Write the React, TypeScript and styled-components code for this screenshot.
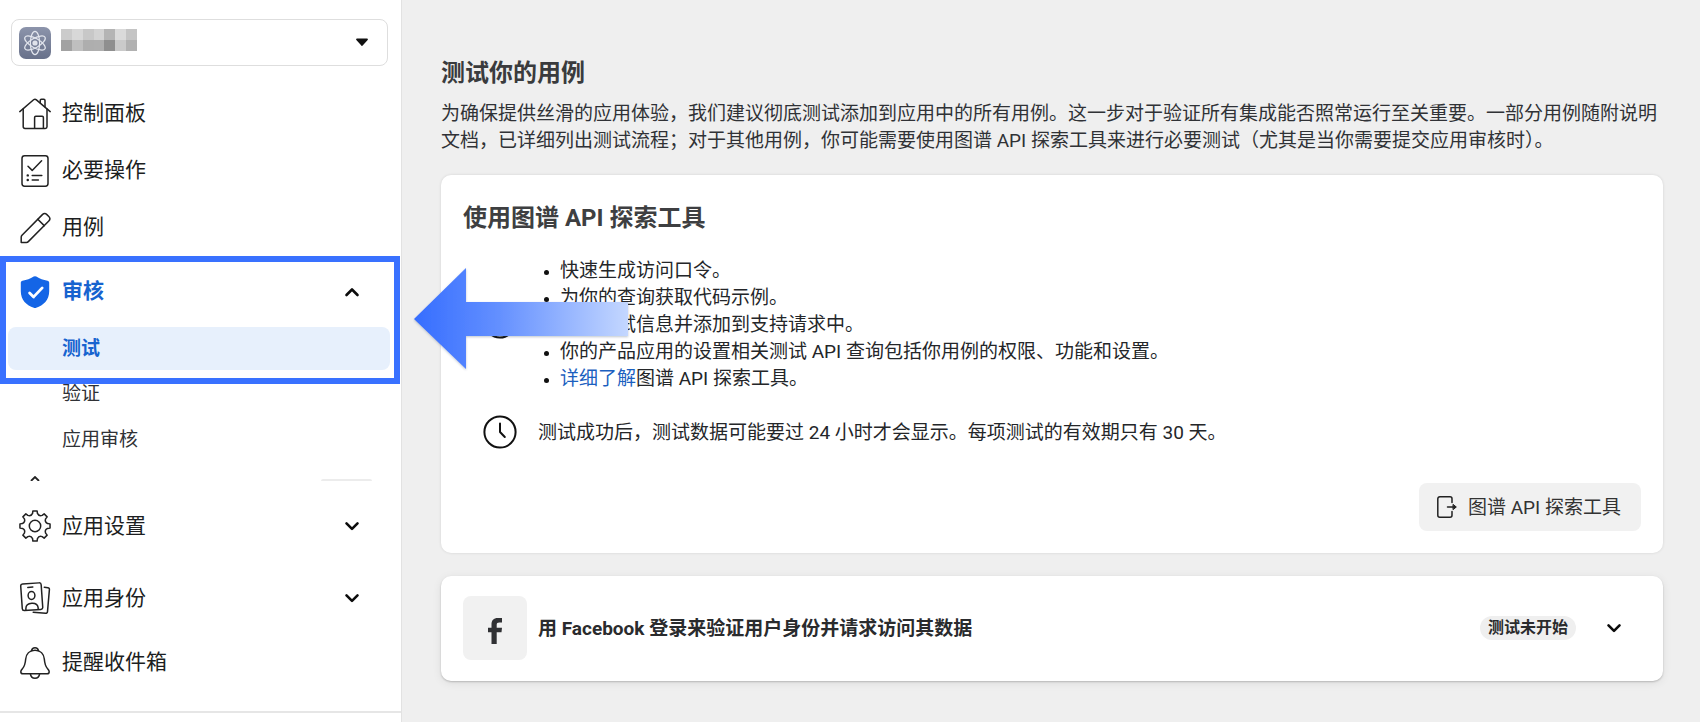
import React from "react";
import styled, { createGlobalStyle } from "styled-components";

const GlobalStyle = createGlobalStyle`
  *, *::before, *::after { box-sizing: border-box; }
  body {
    margin: 0;
    background: #efefef;
    color: #1c1e21;
    font-family: Roboto, "Noto Sans CJK SC", sans-serif;
    font-size: 19px;
    line-height: 27px;
  }
  h1, h2, h3, p, ul { margin: 0; padding: 0; }
  button { font: inherit; color: inherit; border: 0; background: none; padding: 0; cursor: pointer; text-align: left; }
  a { color: inherit; text-decoration: none; }
  svg { display: block; flex: none; }
`;

const Page = styled.div`
  display: flex;
  min-height: 100vh;
`;

const Sidebar = styled.aside`
  flex: none;
  width: 402px;
  padding-top: 19px;
  background: #fff;
  border-right: 1px solid #e2e2e2;
`;

const AppPicker = styled.button`
  display: flex;
  align-items: center;
  width: 377px;
  height: 47px;
  margin: 0 0 19px 11px;
  padding: 0 18px 0 7px;
  border: 1px solid #dedede;
  border-radius: 8px;
`;

const MaskedName = styled.span`
  display: grid;
  grid-template-columns: repeat(7, 1fr);
  width: 76px;
  height: 22px;
  margin: 0 auto 6px 10px;
`;

const MaskCell = styled.span<{ $shade: string }>`
  background: ${(p) => p.$shade};
`;

const rowLayout = `
  display: flex;
  align-items: center;
  gap: 11px;
  width: 100%;
  padding: 0 41px 0 19px;
  font-size: 21px;
`;

const NavLink = styled.a`
  ${rowLayout}
  height: 57px;
`;

const NavToggle = styled.button<{ $active?: boolean }>`
  ${rowLayout}
  height: ${(p) => (p.$active ? 71 : 72)}px;
  color: ${(p) => (p.$active ? "#1763cf" : "inherit")};
  font-weight: ${(p) => (p.$active ? 700 : 400)};
`;

const NavLabel = styled.span`
  flex: 1;
`;

const ReviewGroup = styled.div`
  position: relative;
`;

const SubLink = styled.a<{ $active?: boolean }>`
  display: flex;
  align-items: center;
  height: ${(p) => (p.$active ? 43 : 46)}px;
  margin: 0 11px 0 8px;
  padding-left: 54px;
  border-radius: 8px;
  background: ${(p) => (p.$active ? "#e7f0fc" : "transparent")};
  color: ${(p) => (p.$active ? "#1763cf" : "#303236")};
  font-weight: ${(p) => (p.$active ? 700 : 400)};
`;

const Callout = styled.div`
  position: absolute;
  top: 0;
  left: 0;
  right: 1px;
  height: 128px;
  border: 6px solid #3971ff;
  pointer-events: none;
`;

const CalloutArrow = styled.svg`
  position: absolute;
  top: 11px;
  left: calc(100% + 12px);
  z-index: 1;
  pointer-events: none;
`;

const ClippedRow = styled.div`
  display: flex;
  align-items: flex-end;
  justify-content: space-between;
  height: 28px;
  padding: 0 29px 9px 30px;
`;

const ClippedBadge = styled.span`
  width: 51px;
  height: 2px;
  border-radius: 2px 2px 0 0;
  background: #ececec;
`;

const SidebarFooter = styled.div`
  margin-top: 20px;
  border-top: 2px solid #e6e6e6;
`;

const Main = styled.main`
  flex: 1;
  min-width: 0;
  padding: 57px 37px 40px 39px;
`;

const Title = styled.h1`
  font-size: 24px;
  line-height: 32px;
  font-weight: 700;
  color: #3a3b3d;
`;

const Intro = styled.p`
  margin: 11px 0 21px;
  color: #303236;
`;

const Card = styled.section`
  padding: 27px 22px 22px;
  border-radius: 10px;
  background: #fff;
  box-shadow: 0 0 3px rgba(0, 0, 0, 0.12);
`;

const CardTitle = styled.h2`
  font-size: 24px;
  line-height: 32px;
  font-weight: 700;
  color: #3e3f41;
`;

const InfoRow = styled.div`
  display: flex;
  align-items: center;
  gap: 21px;
  min-height: 34px;
  margin-top: 23px;
  padding-left: 20px;
  color: #242629;
`;

const Bullets = styled.ul`
  list-style: none;
  margin-left: 6px;
`;

const Bullet = styled.li`
  display: flex;
  align-items: flex-start;
  gap: 11px;
  &::before {
    content: "";
    flex: none;
    width: 5px;
    height: 5px;
    margin-top: 13px;
    border-radius: 50%;
    background: #111;
  }
`;

const InlineLink = styled.a`
  color: #1b5fbf;
`;

const CardActions = styled.div`
  display: flex;
  justify-content: flex-end;
  margin-top: 34px;
`;

const ToolButton = styled.button`
  display: flex;
  align-items: center;
  gap: 11px;
  height: 48px;
  padding: 0 20px 0 18px;
  border-radius: 8px;
  background: #f1f1f1;
  color: #333;
`;

const UseCaseCard = styled.section`
  display: flex;
  align-items: center;
  margin-top: 23px;
  padding: 20px 41px 21px 22px;
  border-radius: 10px;
  background: #fff;
  box-shadow: 0 1px 2px rgba(0, 0, 0, 0.2), 0 2px 10px rgba(0, 0, 0, 0.08);
`;

const BrandTile = styled.div`
  display: flex;
  align-items: center;
  justify-content: center;
  width: 64px;
  height: 64px;
  padding-top: 5px;
  border-radius: 8px;
  background: #f1f1f1;
`;

const UseCaseTitle = styled.h3`
  flex: 1;
  margin-left: 11px;
  font-size: 19px;
  line-height: 27px;
  font-weight: 700;
  color: #2a2b2d;
`;

const Badge = styled.span`
  margin-right: 30px;
  padding: 0 8px;
  border-radius: 12px;
  background: #efefef;
  font-size: 16px;
  line-height: 24px;
  font-weight: 700;
  color: #2a2b2d;
`;

const stroke = {
  fill: "none",
  stroke: "#222",
  strokeWidth: 1.5,
  strokeLinecap: "round",
  strokeLinejoin: "round",
} as const;

const Icon = ({ children, size = 32 }: { children: React.ReactNode; size?: number }) => (
  <svg width={size} height={size} viewBox={`0 0 ${size} ${size}`} aria-hidden="true" {...stroke}>
    {children}
  </svg>
);

const HomeIcon = () => (
  <Icon>
    <path d="M.8 13.6 14.6 1.8a2.2 2.2 0 0 1 2.8 0L31.2 13.6" />
    <path d="M4.2 11v17.7a1.7 1.7 0 0 0 1.7 1.7h20.4a1.7 1.7 0 0 0 1.7-1.7V11" />
    <path d="M21.2 4.8V2.4A1.2 1.2 0 0 1 22.4 1.2h2.4A1.2 1.2 0 0 1 26 2.4v6.4" />
    <path d="M15.6 30.2V19.4a1.2 1.2 0 0 1 1.2-1.2h6.4a1.2 1.2 0 0 1 1.2 1.2v10.8" />
  </Icon>
);

const ChecklistIcon = () => (
  <Icon>
    <rect x="3" y=".8" width="26" height="30.4" rx="2.6" />
    <path d="m9 11.2 4.2 4.2 9.4-9.6M13.2 20.4h9.6M13.2 25h6.2" />
    <path d="M8.7 20.4h.1M8.7 25h.1" strokeWidth="2.4" />
  </Icon>
);

const PencilIcon = () => (
  <Icon>
    <path d="M2.2 30.4v-5.2c0-.7.3-1.4.8-1.9L23.4 2.6a3.2 3.2 0 0 1 4.5 0l1.9 1.9a3.2 3.2 0 0 1 0 4.5L9.3 29.6c-.5.5-1.2.8-1.9.8z" />
    <path d="m18.8 7.2 6.4 6.4" />
  </Icon>
);

const ShieldIcon = () => (
  <svg width="32" height="32" viewBox="0 0 32 32" aria-hidden="true">
    <path
      d="M14.7.6a2.4 2.4 0 0 1 2.6 0c3.5 2.2 7 3.4 11.2 4.2 1 .2 1.7 1 1.7 2v8.4c0 8.6-5.8 14.3-13 16.5-.8.3-1.6.3-2.4 0C7.6 29.5 1.8 23.8 1.8 15.2V6.8c0-1 .7-1.8 1.7-2C7.7 4 11.2 2.8 14.7.6z"
      fill="#1465e6"
    />
    <path d="m10.6 17 4 3.9 8.6-9" fill="none" stroke="#fff" strokeWidth="2.8" strokeLinecap="round" strokeLinejoin="round" />
  </svg>
);

const polar = (radius: number, degrees: number) => {
  const a = (degrees * Math.PI) / 180;
  return `${(16 + radius * Math.sin(a)).toFixed(2)} ${(16 - radius * Math.cos(a)).toFixed(2)}`;
};

const gearPath =
  Array.from({ length: 8 }, (_, i) => {
    const a = i * 45;
    return `${i ? "L" : "M"}${polar(15.2, a - 8)}L${polar(15.2, a + 8)}L${polar(12.8, a + 11)}Q${polar(10.2, a + 22.5)} ${polar(12.8, a + 34)}`;
  }).join("") + "Z";

const GearIcon = () => (
  <Icon>
    <path d={gearPath} />
    <circle cx="16" cy="16" r="5.7" />
  </Icon>
);

const IdentityIcon = () => (
  <Icon>
    <rect x="2.5" y="1.4" width="20.5" height="26.6" rx="2" transform="rotate(-4 13 15)" />
    <path d="m8.8 5.500 5-.4" />
    <ellipse cx="12.5" cy="13.5" rx="3.4" ry="3.9" />
    <path d="M6.900 27.900v-1.600c0-3 2.200-4.900 5.900-5.100 3.600-.2 5.900 1.400 6.300 4.200l.1 1.700" />
    <path d="m25.300 5.300 3.600.4c1 .1 1.600.9 1.500 1.900l-1.900 22c-.1 1.100-.9 1.700-1.900 1.600l-12.400-1" />
  </Icon>
);

const BellIcon = () => (
  <Icon>
    <path d="M16 3.2c-5.500 0-8.800 3.900-9.300 8.800-.4 4.700-1 7.300-3.300 9.700-1.100 1.200-1.600 2-1.600 3 0 1.300.9 2.100 2.300 2.100h23.800c1.400 0 2.300-.8 2.300-2.100 0-1-.5-1.800-1.600-3-2.300-2.400-2.900-5-3.300-9.700C24.800 7.100 21.500 3.200 16 3.200z" />
    <path d="M12.600 3.800c.2-1.800 1.500-3 3.400-3s3.200 1.200 3.400 3M11.400 26.900c.3 2.600 2.100 4.300 4.600 4.300s4.300-1.700 4.600-4.300" />
  </Icon>
);

const ClockIcon = () => (
  <Icon size={34}>
    <circle cx="17" cy="17" r="15.6" stroke="#111" strokeWidth="2" />
    <path d="M17 8.500V17l4.800 5" stroke="#111" strokeWidth="2" />
  </Icon>
);

const InfoIcon = () => (
  <Icon size={34}>
    <circle cx="17" cy="15" r="14.6" stroke="#111" strokeWidth="2" />
    <path d="M17 14v8M17 9v.1" stroke="#111" strokeWidth="2" />
  </Icon>
);

const Chevron = ({ up = false }: { up?: boolean }) => (
  <svg width="16" height="16" viewBox="0 0 16 16" aria-hidden="true" fill="none" stroke="#0c0c0c" strokeWidth="2.600" strokeLinecap="round" strokeLinejoin="round">
    <path d={up ? "M2.500 11 8 5.500l5.500 5.500" : "M2.500 5.300 8 10.800l5.500-5.500"} />
  </svg>
);

const ExitIcon = () => (
  <svg width="20" height="22" viewBox="0 0 20 22" aria-hidden="true" {...stroke}>
    <path d="M15 6.600V2.800A2 2 0 0 0 13 .8H2.800a2 2 0 0 0-2 2v16.400a2 2 0 0 0 2 2H13a2 2 0 0 0 2-2v-3.800" />
    <path d="M10.500 11h7" />
    <path d="m16.300 8.600 3 2.400-3 2.400z" fill="#222" strokeWidth="1" />
  </svg>
);

const AtomIcon = () => (
  <svg width="32" height="32" viewBox="0 0 32 32" aria-hidden="true">
    <defs>
      <linearGradient id="atomFill" x1="0" y1="0" x2="0" y2="1">
        <stop offset="0" stopColor="#8c94ab" />
        <stop offset="1" stopColor="#68718a" />
      </linearGradient>
    </defs>
    <rect width="32" height="32" rx="7" fill="url(#atomFill)" />
    <g fill="none" stroke="#e3e6ee" strokeWidth="1.2">
      {[0, 60, 120].map((angle) => (
        <ellipse key={angle} cx="16" cy="16" rx="4.6" ry="11.6" transform={`rotate(${angle} 16 16)`} />
      ))}
    </g>
    <circle cx="16" cy="16" r="2.6" fill="#dfe2ea" />
  </svg>
);

const FacebookIcon = () => (
  <svg width="14" height="26" viewBox="0 0 14 26" aria-hidden="true">
    <path d="M3.500 26V14.300H0V9.700h3.500V6.500C3.500 2.300 5.700 0 9.700 0H14v4.400h-2.800c-1.800 0-2.500.8-2.500 2.400v2.900H14l-.5 4.600H8.700V26z" fill="#303134" />
  </svg>
);

const maskShades = [
  "#cbcbcb", "#d8d8d8", "#c8c8c8", "#d3d3d3", "#b4b4b4", "#dadada", "#c4c4c4",
  "#a2a2a2", "#bfbfbf", "#aeaeae", "#afafaf", "#8f8f8f", "#cacaca", "#b1b1b1",
];

export default function App() {
  return (
    <Page>
      <GlobalStyle />
      <Sidebar>
        <AppPicker type="button" aria-haspopup="listbox" aria-label="应用">
          <AtomIcon />
          <MaskedName>
            {maskShades.map((shade, i) => (
              <MaskCell key={i} $shade={shade} />
            ))}
          </MaskedName>
          <svg width="14" height="9" viewBox="0 0 14 9" aria-hidden="true">
            <path d="M2 1.500h10L7 7z" fill="#111" stroke="#111" strokeWidth="1.8" strokeLinejoin="round" />
          </svg>
        </AppPicker>
        <nav>
          <NavLink href="#dashboard"><HomeIcon />控制面板</NavLink>
          <NavLink href="#actions"><ChecklistIcon />必要操作</NavLink>
          <NavLink href="#use-cases"><PencilIcon />用例</NavLink>
          <ReviewGroup>
            <NavToggle type="button" $active aria-expanded="true">
              <ShieldIcon />
              <NavLabel>审核</NavLabel>
              <Chevron up />
            </NavToggle>
            <SubLink href="#test" $active aria-current="page">测试</SubLink>
            <SubLink href="#verify">验证</SubLink>
            <SubLink href="#app-review">应用审核</SubLink>
            <Callout />
            <CalloutArrow width="220" height="106" viewBox="0 0 220 106" aria-hidden="true">
              <defs>
                <linearGradient id="arrowFill" x1="0" y1="0" x2="1" y2="0">
                  <stop offset="0" stopColor="#356dff" />
                  <stop offset=".4" stopColor="#6490ff" />
                  <stop offset="1" stopColor="#c4d7ff" />
                </linearGradient>
                <filter id="arrowShadow" x="-5%" y="-5%" width="110%" height="115%">
                  <feDropShadow dx="0" dy="1" stdDeviation="1" floodColor="#33415f" floodOpacity=".3" />
                </filter>
              </defs>
              <path d="M1 52 53 1v34h162v34H53v33z" fill="url(#arrowFill)" filter="url(#arrowShadow)" />
            </CalloutArrow>
          </ReviewGroup>
          <ClippedRow>
            <svg width="10" height="5" viewBox="0 0 10 5" aria-hidden="true">
              <path d="M1 5 5 1l4 4" fill="none" stroke="#222" strokeWidth="1.8" />
            </svg>
            <ClippedBadge />
          </ClippedRow>
          <NavToggle type="button" aria-expanded="false">
            <GearIcon />
            <NavLabel>应用设置</NavLabel>
            <Chevron />
          </NavToggle>
          <NavToggle type="button" aria-expanded="false">
            <IdentityIcon />
            <NavLabel>应用身份</NavLabel>
            <Chevron />
          </NavToggle>
          <NavLink href="#inbox"><BellIcon />提醒收件箱</NavLink>
        </nav>
        <SidebarFooter />
      </Sidebar>

      <Main>
        <Title>测试你的用例</Title>
        <Intro>
          为确保提供丝滑的应用体验，我们建议彻底测试添加到应用中的所有用例。这一步对于验证所有集成能否照常运行至关重要。一部分用例随附说明文档，已详细列出测试流程；对于其他用例，你可能需要使用图谱 API 探索工具来进行必要测试（尤其是当你需要提交应用审核时）。
        </Intro>

        <Card>
          <CardTitle>使用图谱 API 探索工具</CardTitle>
          <InfoRow>
            <InfoIcon />
            <Bullets>
              <Bullet>快速生成访问口令。</Bullet>
              <Bullet>为你的查询获取代码示例。</Bullet>
              <Bullet>收集调试信息并添加到支持请求中。</Bullet>
              <Bullet>你的产品应用的设置相关测试 API 查询包括你用例的权限、功能和设置。</Bullet>
              <Bullet>
                <span><InlineLink href="#explorer-docs">详细了解</InlineLink>图谱 API 探索工具。</span>
              </Bullet>
            </Bullets>
          </InfoRow>
          <InfoRow>
            <ClockIcon />
            <p>测试成功后，测试数据可能要过 24 小时才会显示。每项测试的有效期只有 30 天。</p>
          </InfoRow>
          <CardActions>
            <ToolButton type="button"><ExitIcon />图谱 API 探索工具</ToolButton>
          </CardActions>
        </Card>

        <UseCaseCard>
          <BrandTile><FacebookIcon /></BrandTile>
          <UseCaseTitle>用 Facebook 登录来验证用户身份并请求访问其数据</UseCaseTitle>
          <Badge>测试未开始</Badge>
          <button type="button" aria-label="展开"><Chevron /></button>
        </UseCaseCard>
      </Main>
    </Page>
  );
}
